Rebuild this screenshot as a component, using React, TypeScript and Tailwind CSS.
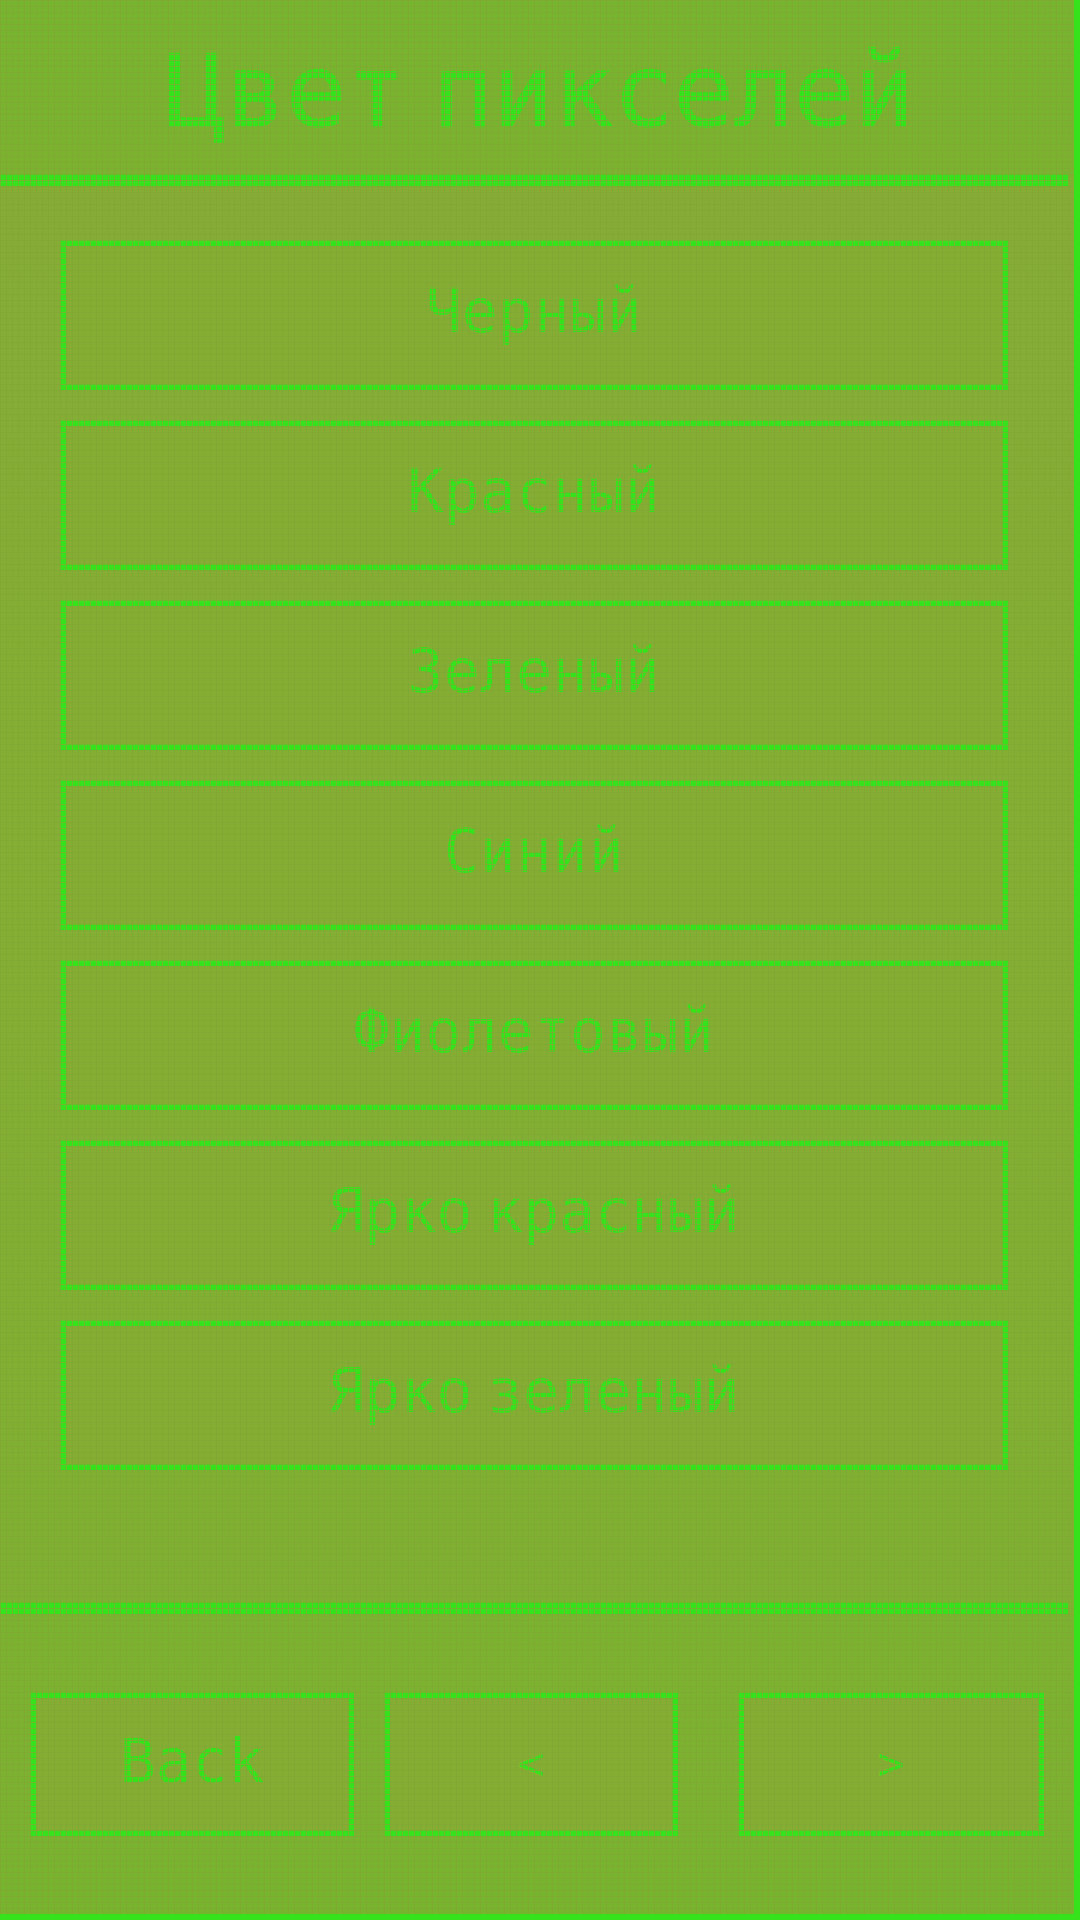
import React from "react";

const colors = [
  "Черный",
  "Красный",
  "Зеленый",
  "Синий",
  "Фиолетовый",
  "Ярко красный",
  "Ярко зеленый",
];

const mono = { fontFamily: '"DejaVu Sans Mono", "Liberation Mono", monospace' };

// пробел в пиксельном шрифте уже обычной ячейки
function PixelText({ text, space }: { text: string; space: string }) {
  const words = text.split(" ");
  return (
    <>
      {words.map((w, i) => (
        <React.Fragment key={i}>
          {i > 0 && <span className={space}> </span>}
          {w}
        </React.Fragment>
      ))}
    </>
  );
}

function ColorButton({ label }: { label: string }) {
  return (
    <button className="flex h-[150px] w-[948px] items-center justify-center whitespace-pre border-[6px] border-[#36e21b] bg-[#85ad34] pb-[8px] text-[60px] leading-none text-[#36e21b]">
      <PixelText text={label} space="tracking-[-22px]" />
    </button>
  );
}

export default function App() {
  return (
    <div
      className="relative flex h-[1920px] w-[1080px] flex-col overflow-hidden border-r-[6px] border-b-[6px] border-[#36e21b] bg-[#80af32]"
      style={mono}
    >
      {/* заголовок */}
      <header className="flex h-[174px] items-start justify-center bg-gradient-to-b from-[#77b52e] to-[#7bb22f] pt-[42px] pl-[6px]">
        <h1 className="whitespace-pre text-[100px] leading-none text-[#36e21b] [-webkit-text-stroke:1.5px_#36e21b]">
          <PixelText text="Цвет пикселей" space="tracking-[-34px]" />
        </h1>
      </header>
      <div className="h-[12px] w-[1068px] bg-[#36e21b]" />

      {/* список цветов */}
      <main className="flex h-[1416px] flex-col items-start gap-[30px] bg-gradient-to-b from-[#86ac35] via-[#84ae34] to-[#7fb031] pt-[54px] pl-[60px]">
        {colors.map((c) => (
          <ColorButton key={c} label={c} />
        ))}
      </main>
      <div className="h-[12px] w-[1068px] bg-[#36e21b]" />

      {/* навигация */}
      <footer className="flex flex-1 items-start bg-gradient-to-b from-[#7ab32f] via-[#7db131] to-[#76b52d] pt-[78px] pl-[30px]">
        <button className="flex h-[144px] w-[324px] items-center justify-center border-[6px] border-[#36e21b] bg-[#85ad34] pb-[6px] text-[60px] leading-none text-[#36e21b]">
          Back
        </button>
        <button className="ml-[30px] flex h-[144px] w-[294px] items-center justify-center border-[6px] border-[#36e21b] bg-[#85ad34] text-[44px] leading-none text-[#36e21b]">
          &lt;
        </button>
        <button className="ml-[60px] flex h-[144px] w-[306px] items-center justify-center border-[6px] border-[#36e21b] bg-[#85ad34] text-[44px] leading-none text-[#36e21b]">
          &gt;
        </button>
      </footer>

      {/* пиксельная сетка поверх экрана */}
      <div className="pointer-events-none absolute inset-0 bg-[linear-gradient(to_right,rgba(128,168,52,0.75)_1px,transparent_1px),linear-gradient(to_bottom,rgba(128,168,52,0.75)_1px,transparent_1px)] bg-size-[6px_6px]" />
    </div>
  );
}
